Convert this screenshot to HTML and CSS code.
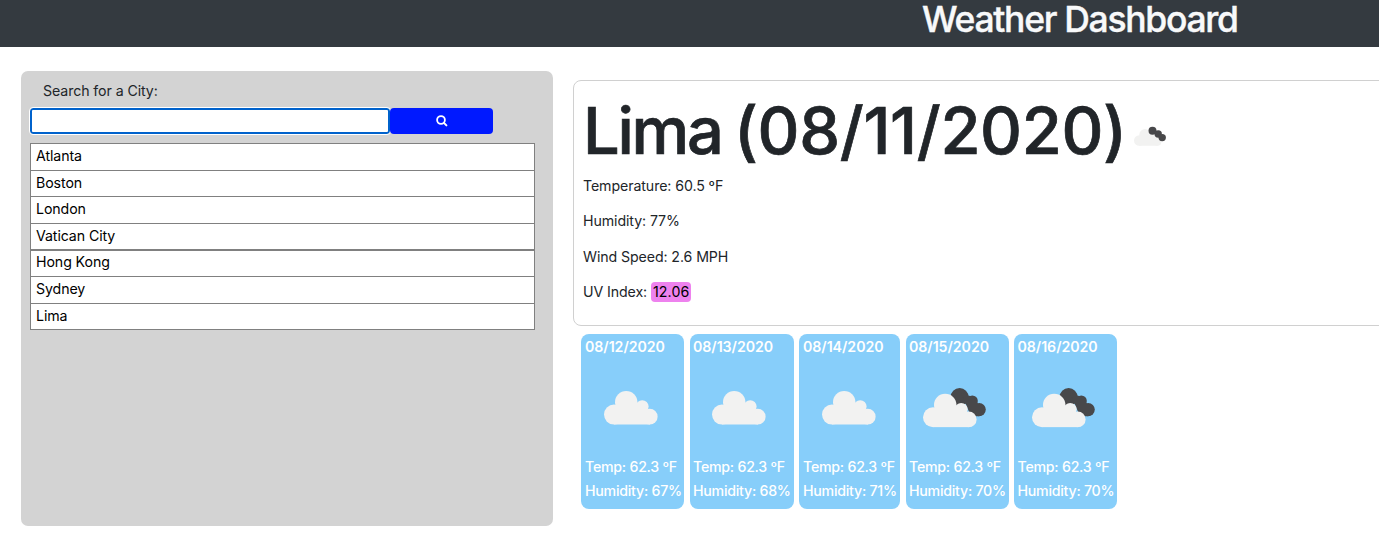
FILE: index.html
```html
<!DOCTYPE html>
<html lang="en">
<head>
<meta charset="utf-8">
<title>Weather Dashboard</title>
<link rel="stylesheet" href="styles.css">
</head>
<body>
<svg class="defs" width="0" height="0" aria-hidden="true">
  <symbol id="cloud" viewBox="0 0 54 34">
    <g fill="#f2f2f1"><circle cx="10" cy="23.6" r="10"/><circle cx="22.2" cy="11.2" r="11.2"/><circle cx="38.2" cy="15.6" r="6.4"/><circle cx="45.7" cy="25.7" r="7.9"/><path d="M10 33.6V21l12-10 16 2 4 8 4 5v7.6z"/></g>
  </symbol>
  <symbol id="broken" viewBox="0 0 63 39.5">
    <g fill="#48484a"><circle cx="36.6" cy="9" r="9"/><circle cx="49.3" cy="13" r="5.5"/><circle cx="56.2" cy="21.6" r="6.6"/><path d="M38 5l12 4 6 8v11.2h-8z"/></g>
    <g transform="translate(0 5.7)" fill="#f2f2f1"><circle cx="10" cy="23.6" r="10"/><circle cx="22.2" cy="11.2" r="11.2"/><circle cx="38.2" cy="15.6" r="6.4"/><circle cx="45.7" cy="25.7" r="7.9"/><path d="M10 33.6V21l12-10 16 2 4 8 4 5v7.6z"/></g>
  </symbol>
</svg>
<header class="header"><h1 class="title">Weather Dashboard</h1></header>
<main class="layout">
  <aside class="sidebar">
    <label class="label" for="city">Search for a City:</label>
    <div class="search">
      <input class="input" id="city" type="text">
      <button class="button" aria-label="Search"><svg width="12" height="12" viewBox="0 0 12 12"><circle cx="5" cy="5" r="3.9" fill="none" stroke="#fff" stroke-width="1.8"/><path d="M7.9 7.9l2.5 2.5" stroke="#fff" stroke-width="2" stroke-linecap="round"/></svg></button>
    </div>
    <ul class="cities">
      <li class="city">Atlanta</li>
      <li class="city city-short">Boston</li>
      <li class="city">London</li>
      <li class="city city-thick">Vatican City</li>
      <li class="city city-short city-high">Hong Kong</li>
      <li class="city">Sydney</li>
      <li class="city city-short">Lima</li>
    </ul>
  </aside>
  <section class="content">
    <div class="current">
      <h2 class="heading"><span class="place">Lima</span> <span class="today">(08/11/2020)</span><svg class="now" width="32" height="20" viewBox="0 0 32 20"><g fill="#f2f2f1"><circle cx="5.3" cy="14.5" r="5.3"/><circle cx="11" cy="8.8" r="5.7"/><circle cx="23.4" cy="15.8" r="4"/><path d="M5 19.8V13l6-6 9 1 7 8-3 3.8z"/></g><g fill="#48484a"><circle cx="18.5" cy="4.7" r="4"/><circle cx="24.2" cy="8" r="3.7"/><circle cx="28.2" cy="11.6" r="3.7"/></g></svg></h2>
      <p class="stat">Temperature: 60.5 ºF</p>
      <p class="stat">Humidity: 77%</p>
      <p class="stat">Wind Speed: 2.6 MPH</p>
      <p class="stat">UV Index: <span class="uv">12.06</span></p>
    </div>
    <div class="forecast">
      <article class="card"><h3 class="date">08/12/2020</h3><div class="sky"><svg width="54" height="34"><use href="#cloud"/></svg></div><p class="line">Temp: 62.3 ºF</p><p class="line">Humidity: 67%</p></article>
      <article class="card card-b"><h3 class="date">08/13/2020</h3><div class="sky"><svg width="54" height="34"><use href="#cloud"/></svg></div><p class="line">Temp: 62.3 ºF</p><p class="line">Humidity: 68%</p></article>
      <article class="card card-c"><h3 class="date">08/14/2020</h3><div class="sky"><svg width="54" height="34"><use href="#cloud"/></svg></div><p class="line">Temp: 62.3 ºF</p><p class="line">Humidity: 71%</p></article>
      <article class="card card-d"><h3 class="date">08/15/2020</h3><div class="sky sky-broken"><svg width="63" height="39.5"><use href="#broken"/></svg></div><p class="line">Temp: 62.3 ºF</p><p class="line">Humidity: 70%</p></article>
      <article class="card card-e"><h3 class="date">08/16/2020</h3><div class="sky sky-broken"><svg width="63" height="39.5"><use href="#broken"/></svg></div><p class="line">Temp: 62.3 ºF</p><p class="line">Humidity: 70%</p></article>
    </div>
  </section>
</main>
</body>
</html>
```
FILE: styles.css
```css
* { box-sizing: border-box; }
body { margin: 0; height: 553px; overflow: hidden; background: #fff; color: #212529; font: 14.2px/21px Inter, sans-serif; letter-spacing: -0.1px; }
h1, h2, h3, p, ul { margin: 0; padding: 0; }
.defs { display: block; }
.header { height: 47px; padding-left: 922px; background: #343a40; color: #f8f9fa; }
.title { font-size: 35.5px; font-weight: 500; line-height: 40px; letter-spacing: -1.3px; white-space: nowrap; -webkit-text-stroke: 0.4px currentColor; }
.layout { display: flex; padding: 24px 0 0 21px; }
.sidebar { flex: none; width: 532px; height: 455px; padding: 9px 18px 0 9px; border-radius: 7px; background: #d3d3d3; }
.label { display: block; height: 28px; padding-left: 13px; }
.search { display: flex; height: 26px; }
.input { width: 360px; height: 26px; border: 2px solid #0062cc; border-radius: 3px; outline: 1px solid #fff; background: #fff; padding: 0 4px; }
.button { display: flex; align-items: center; justify-content: center; width: 103px; padding: 0 0 1px; border: 0; border-radius: 4px; background: #0019ff; }
.cities { margin-top: 9px; border: 1px solid #808080; border-bottom: 0; list-style: none; background: #fff; color: #000; }
.city { height: 27px; padding: 1px 5px; border-bottom: 1px solid #808080; }
.city-short { height: 26px; }
.city-thick { border-bottom-width: 2px; }
.city-high { padding-top: 0; }
.content { flex: none; width: 820px; margin-left: 20px; padding-top: 9px; }
.current { height: 246px; padding: 9px; border: 1px solid #d0d0d0; border-radius: 8px; }
.heading { display: flex; height: 85px; align-items: flex-start; font-size: 65px; font-weight: 500; line-height: 82px; white-space: nowrap; -webkit-text-stroke: 0.7px currentColor; }
.place { width: 151px; letter-spacing: -2.3px; }
.today { width: 390px; letter-spacing: -0.35px; }
.now { margin: 36px 0 0 10px; }
.stat { height: 35.4px; line-height: 21px; }
.uv { display: inline-block; height: 20px; padding: 0 2px; border-radius: 4px; background: #ee82ee; color: #000; line-height: 19px; letter-spacing: 0.1px; }
.forecast { display: flex; gap: 6px; margin: 8px 0 0 8px; }
.card { width: 103px; height: 175px; padding: 2px 0 0 4px; border-radius: 8px; background: #87cefa; color: #fff; font-weight: 500; white-space: nowrap; letter-spacing: -0.25px; }
.card-b { width: 104px; padding-left: 3px; }
.card-c { width: 101px; margin-left: -1px; }
.card-d { padding-left: 3px; }
.card-e { margin-left: -1px; padding-left: 3.5px; }
.date { height: 22px; font-size: 14.2px; font-weight: 600; line-height: 22px; letter-spacing: -0.05px; }
.sky { height: 97px; padding: 33px 0 0 19px; }
.sky-broken { padding: 30px 0 0 14px; }
.line { height: 24px; line-height: 24px; }
```
